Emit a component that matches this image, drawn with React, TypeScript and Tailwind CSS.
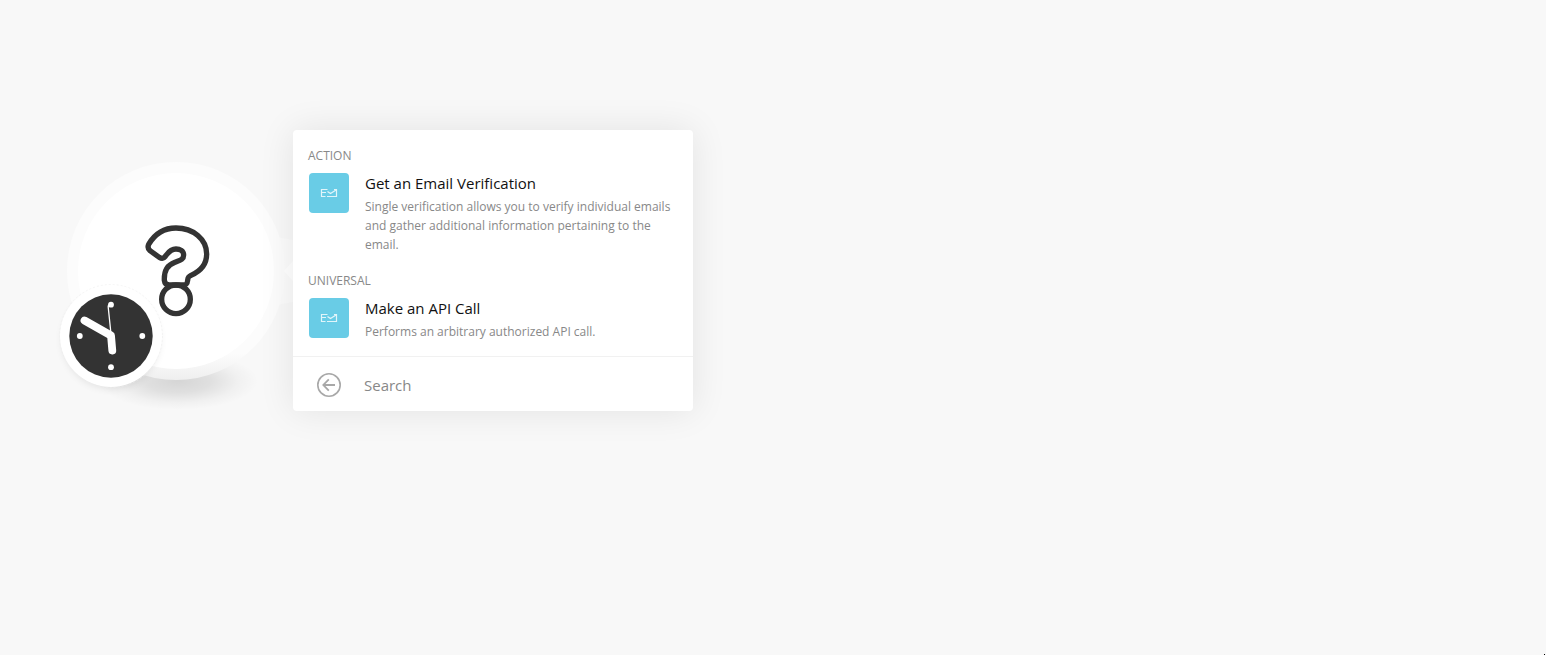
import React from "react";

type Action = { title: string; description: string };

const groups: { label: string; actions: Action[] }[] = [
  {
    label: "ACTION",
    actions: [
      {
        title: "Get an Email Verification",
        description:
          "Single verification allows you to verify individual emails and gather additional information pertaining to the email.",
      },
    ],
  },
  {
    label: "UNIVERSAL",
    actions: [
      {
        title: "Make an API Call",
        description: "Performs an arbitrary authorized API call.",
      },
    ],
  },
];

function ModuleNode() {
  return (
    <svg
      className="block h-[300px] w-[243px] shrink-0"
      viewBox="50 130 243 300"
      role="img"
      aria-label="Empty scheduled module"
    >
      <defs>
        <radialGradient id="ground">
          <stop offset="0" stopColor="#000" stopOpacity="0.14" />
          <stop offset="0.4" stopColor="#000" stopOpacity="0.1" />
          <stop offset="0.75" stopColor="#000" stopOpacity="0.03" />
          <stop offset="1" stopColor="#000" stopOpacity="0" />
        </radialGradient>
        <filter id="small" x="-30%" y="-30%" width="160%" height="160%">
          <feGaussianBlur stdDeviation="4" />
        </filter>
        <linearGradient id="ring" x1="0" y1="0" x2="0" y2="1">
          <stop offset="0" stopColor="#fcfcfc" />
          <stop offset="0.88" stopColor="#fcfcfc" />
          <stop offset="1" stopColor="#efefef" />
        </linearGradient>
      </defs>
      {/* ground shadow */}
      <ellipse cx="178" cy="381" rx="80" ry="29" fill="url(#ground)" />
      {/* connector port */}
      <path d="M270 236 L293 240 V302 L270 306 Z" fill="#fbfbfb" />
      <circle cx="176" cy="271" r="109" fill="url(#ring)" />
      <circle cx="176" cy="271" r="98" fill="#fff" />
      <path d="M284 271 L293 261 V281 Z" fill="#fff" />
      {/* question mark */}
      <g
        transform="translate(130 215) scale(0.3333)"
        fill="none"
        stroke="#333"
        strokeWidth="16"
        strokeLinejoin="round"
      >
        <path d="M56 88 C72 61 100 39 138 39 C190 39 230 73 230 117 C230 145 213 168 183 181 C173 186 174 189 173 196 C172 205 170 210 160 210 L118 210 C108 210 104 204 103 196 C102 165 112 151 135 142 C150 136 161 134 161 120 C161 108 150 102 138 102 C125 102 118 108 109 120 C103 130 97 132 88 127 L60 107 C53 101 53 95 56 88 Z" />
        <circle cx="138" cy="253" r="43" />
      </g>
      {/* clock badge */}
      <circle cx="111" cy="340" r="48" fill="#000" opacity="0.1" filter="url(#small)" />
      <circle cx="111" cy="336" r="51" fill="#fff" />
      <circle cx="111" cy="336" r="51.5" fill="none" stroke="#eee" strokeWidth="0.6" strokeDasharray="2 2" />
      <circle cx="111" cy="336" r="41.7" fill="#333" />
      <g fill="#fff">
        <circle cx="111" cy="304.7" r="2.9" />
        <circle cx="142.3" cy="336" r="2.9" />
        <circle cx="111" cy="367.2" r="2.9" />
        <circle cx="79.8" cy="336" r="2.9" />
      </g>
      <g fill="none" stroke="#fff" strokeLinecap="round" strokeLinejoin="round">
        <path d="M84.5 320.5 L111 335.5 L112.3 350.5" strokeWidth="7.8" />
        <path d="M110.5 304.5 Q108 305 108.2 307 L111 334" strokeWidth="1.3" />
      </g>
    </svg>
  );
}

function MailTile() {
  return (
    <span className="flex size-10 shrink-0 items-center justify-center rounded bg-[#69cce6]">
      <svg className="h-2.5 w-[18px]" viewBox="0 0 18 10" fill="none" stroke="#e1f5fa" aria-hidden="true">
        <path d="M7.5 1.5 H1.5 V8.5 H5.5 M1.5 4.5 H6 M7 8.5 H16.5 V1.5 H14" strokeWidth="1.2" />
        <path d="M7.5 3.5 L10.5 5.5 L16 2" strokeWidth="1.3" />
      </svg>
    </span>
  );
}

export default function App() {
  return (
    <main className="relative flex min-h-screen items-start bg-[#f8f8f8] pl-[50px] pt-[130px] font-['Open_Sans','Noto_Sans',sans-serif]">
      <ModuleNode />
      <section className="relative w-full max-w-[400px] rounded bg-white shadow-[0_0_36px_rgba(0,0,0,0.09)]">
        <div className="flex flex-col gap-[17px] px-4 pb-[15px] pt-4">
          {groups.map((group) => (
            <div key={group.label}>
              <h2 className="-ml-px mb-2 text-xs leading-[19px] text-[#888]">{group.label}</h2>
              {group.actions.map((action) => (
                <button key={action.title} type="button" className="flex w-full items-start gap-4 text-left">
                  <MailTile />
                  <span className="block">
                    <span className="mb-1 block text-[15px] leading-5 text-[#111]">{action.title}</span>
                    <span className="block text-xs leading-[19px] text-[#888]">{action.description}</span>
                  </span>
                </button>
              ))}
            </div>
          ))}
        </div>
        <button
          type="button"
          className="flex w-full items-center gap-[23px] border-t border-[#f1f1f1] px-6 pb-[14px] pt-4 text-left text-[15px] leading-6 text-[#888]"
        >
          <svg className="size-6" viewBox="0 0 24 24" fill="none" stroke="#a8a8a8" aria-hidden="true">
            <circle cx="12" cy="12" r="11.2" strokeWidth="1.6" />
            <path d="M18 12 H6.8 M11.8 6.3 L6.3 12 L11.8 17.7" strokeWidth="1.8" />
          </svg>
          Search
        </button>
      </section>
      <span aria-hidden="true" className="absolute bottom-0 right-px size-px bg-black" />
    </main>
  );
}
